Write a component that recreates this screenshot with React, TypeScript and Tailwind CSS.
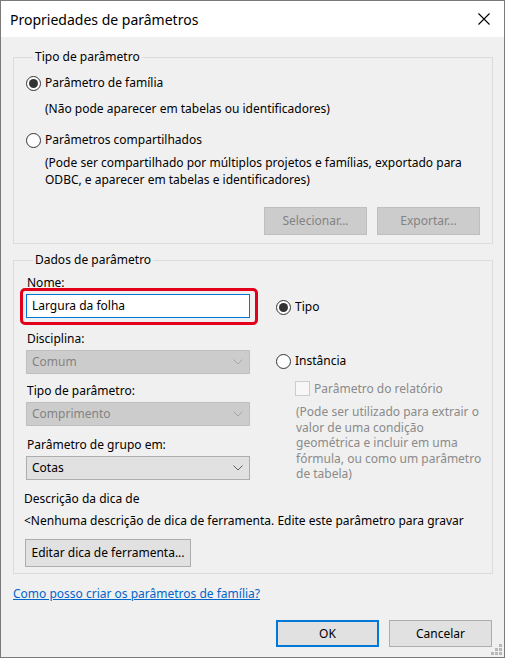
import React from "react";

function Radio({ checked }: { checked?: boolean }) {
  return (
    <span className="w-[15px] h-[15px] rounded-full border border-[#333333] bg-white flex items-center justify-center shrink-0">
      {checked && <span className="w-[9px] h-[9px] rounded-full bg-[#333333]" />}
    </span>
  );
}

function Chevron({ color }: { color: string }) {
  return (
    <svg width="10" height="6" viewBox="0 0 10 6" className="shrink-0">
      <path d="M0.5 0.5 L5 5 L9.5 0.5" fill="none" stroke={color} strokeWidth="1" />
    </svg>
  );
}

function Select({ value, disabled }: { value: string; disabled?: boolean }) {
  return (
    <div
      className={`w-[224px] h-[24px] border flex items-center justify-between pl-[5px] pr-[6px] ${
        disabled ? "bg-[#cccccc] border-[#bfbfbf] text-[#838383]" : "bg-[#e1e1e1] border-[#adadad] text-black"
      }`}
    >
      <span>{value}</span>
      <Chevron color={disabled ? "#a6a6a6" : "#606060"} />
    </div>
  );
}

function GroupTitle({ children }: { children: React.ReactNode }) {
  return (
    <div className="-mt-[10px] ml-[7px] px-[2px] w-fit bg-[#f0f0f0] leading-[18px]">{children}</div>
  );
}

export default function App() {
  const font = { fontFamily: '"Noto Sans", "Open Sans", sans-serif' };

  return (
    <div className="w-[506px] h-[659px] bg-white" style={font}>
      <div className="relative w-[505px] h-[658px] border border-[#7a7a7a] flex flex-col text-[12px] text-black">
        {/* Title bar */}
        <div className="h-[36px] bg-white flex items-center justify-between pl-[9px] pr-[14px] shrink-0">
          <span className="text-[14px] leading-[20px] pt-[1px]">Propriedades de parâmetros</span>
          <svg width="12" height="12" viewBox="0 0 12 12">
            <path d="M0.5 0.5 L11.5 11.5 M11.5 0.5 L0.5 11.5" stroke="#000" strokeWidth="1.1" />
          </svg>
        </div>

        <div className="flex-1 bg-[#f0f0f0] pl-[12px] pr-[11px] flex flex-col">
          {/* Tipo de parâmetro */}
          <div className="mt-[20px] border border-[#dcdcdc] pl-[12px] pr-[12px] pb-[8px]">
            <GroupTitle>Tipo de parâmetro</GroupTitle>
            <div className="mt-[8px] h-[18px] flex items-center gap-[4px]">
              <Radio checked />
              <span>Parâmetro de família</span>
            </div>
            <div className="mt-[8px] leading-[18px] pl-[19px]">(Não pode aparecer em tabelas ou identificadores)</div>
            <div className="mt-[13px] h-[18px] flex items-center gap-[4px]">
              <Radio />
              <span>Parâmetros compartilhados</span>
            </div>
            <div className="mt-[5px] leading-[17px] pl-[19px] whitespace-nowrap">
              (Pode ser compartilhado por múltiplos projetos e famílias, exportado para
              <br />
              ODBC, e aparecer em tabelas e identificadores)
            </div>
            <div className="mt-[19px] flex justify-end gap-[10px]">
              <button className="w-[103px] h-[28px] bg-[#cccccc] border border-[#bfbfbf] text-[#838383]">
                Selecionar...
              </button>
              <button className="w-[103px] h-[28px] bg-[#cccccc] border border-[#bfbfbf] text-[#838383]">
                Exportar...
              </button>
            </div>
          </div>

          {/* Dados de parâmetro */}
          <div className="mt-[16px] border border-[#dcdcdc] pl-[12px] pr-[12px] pb-[6px]">
            <GroupTitle>Dados de parâmetro</GroupTitle>
            <div className="flex h-[211px]">
              <div className="w-[224px] flex flex-col">
                <div className="mt-[5px] leading-[17px] pl-[1px]">Nome:</div>
                <div className="relative mt-[3px]">
                  <div className="w-[224px] h-[24px] bg-white border border-[#0078d7] flex items-center pl-[5px]">
                    Largura da folha
                  </div>
                  <div className="absolute -left-[6px] -top-[6px] w-[238px] h-[37px] border-[3px] border-[#e2001a] rounded-[5px]" />
                </div>
                <div className="mt-[12px] leading-[17px] pl-[1px]">Disciplina:</div>
                <div className="mt-[3px]">
                  <Select value="Comum" disabled />
                </div>
                <div className="mt-[8px] leading-[17px] pl-[1px]">Tipo de parâmetro:</div>
                <div className="mt-[3px]">
                  <Select value="Comprimento" disabled />
                </div>
                <div className="mt-[10px] leading-[17px] pl-[1px]">Parâmetro de grupo em:</div>
                <div className="mt-[3px]">
                  <Select value="Cotas" />
                </div>
              </div>

              <div className="ml-[26px] flex flex-col">
                <div className="mt-[29px] h-[18px] flex items-center gap-[4px]">
                  <Radio checked />
                  <span>Tipo</span>
                </div>
                <div className="mt-[36px] h-[18px] flex items-center gap-[4px]">
                  <Radio />
                  <span>Instância</span>
                </div>
                <div className="mt-[11px] ml-[19px] h-[15px] flex items-center gap-[4px]">
                  <span className="w-[15px] h-[15px] border border-[#cccccc] bg-[#f7f7f7] shrink-0" />
                  <span className="text-[#8a8a8a]">Parâmetro do relatório</span>
                </div>
                <div className="mt-[8px] ml-[20px] leading-[15.6px] text-[#8a8a8a] whitespace-nowrap">
                  (Pode ser utilizado para extrair o
                  <br />
                  valor de uma condição
                  <br />
                  geométrica e incluir em uma
                  <br />
                  fórmula, ou como um parâmetro
                  <br />
                  de tabela)
                </div>
              </div>
            </div>

            <div className="mt-[10px] -ml-[2px] leading-[17px]">Descrição da dica de</div>
            <div className="mt-[5px] -ml-[2px] leading-[17px] whitespace-nowrap">
              &lt;Nenhuma descrição de dica de ferramenta. Edite este parâmetro para gravar
            </div>
            <button className="mt-[10px] -ml-[1px] w-[166px] h-[28px] bg-[#e1e1e1] border border-[#adadad] block">
              Editar dica de ferramenta...
            </button>
          </div>

          <a className="mt-[11px] leading-[17px] text-[#0066cc] underline w-fit" href="#">
            Como posso criar os parâmetros de família?
          </a>

          <div className="mt-[18px] flex justify-end gap-[10px] pr-[1px]">
            <button className="w-[103px] h-[27px] bg-[#e1e1e1] border-2 border-[#0078d7]">OK</button>
            <button className="w-[103px] h-[27px] bg-[#e1e1e1] border border-[#adadad]">Cancelar</button>
          </div>
        </div>

        {/* resize grip */}
        <svg className="absolute right-[1px] bottom-[1px]" width="12" height="12" viewBox="0 0 12 12">
          <rect x="8" y="0" width="3" height="3" fill="#b8b8b8" />
          <rect x="4" y="4" width="3" height="3" fill="#b8b8b8" />
          <rect x="8" y="4" width="3" height="3" fill="#b8b8b8" />
          <rect x="0" y="8" width="3" height="3" fill="#b8b8b8" />
          <rect x="4" y="8" width="3" height="3" fill="#b8b8b8" />
          <rect x="8" y="8" width="3" height="3" fill="#b8b8b8" />
        </svg>
      </div>
    </div>
  );
}
